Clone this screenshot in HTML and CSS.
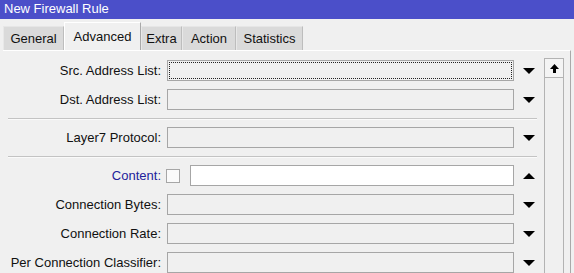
FILE: index.html
```html
<!DOCTYPE html>
<html lang="en">
<head>
    <meta charset="UTF-8">
    <meta name="viewport" content="width=device-width, initial-scale=1.0">
    <title>New Firewall Rule</title>
    <link rel="stylesheet" href="styles.css">
</head>
<body>

    <div class="window">
        <div class="titlebar">New Firewall Rule</div>

        <div class="tabs">
            <div class="tab tab-general">General</div>
            <div class="tab tab-advanced active">Advanced</div>
            <div class="tab tab-extra">Extra</div>
            <div class="tab tab-action">Action</div>
            <div class="tab tab-statistics">Statistics</div>
        </div>

        <div class="panel">
            <div class="form">
                <div class="row">
                    <label>Src. Address List:</label>
                    <div class="field focused"></div>
                    <span class="arrow down"></span>
                </div>
                <div class="row">
                    <label>Dst. Address List:</label>
                    <div class="field"></div>
                    <span class="arrow down"></span>
                </div>

                <div class="sep"></div>

                <div class="row">
                    <label>Layer7 Protocol:</label>
                    <div class="field"></div>
                    <span class="arrow down"></span>
                </div>

                <div class="sep sep-wide"></div>

                <div class="row">
                    <label class="label-blue">Content:</label>
                    <div class="field-group">
                        <span class="checkbox"></span>
                        <div class="field white"></div>
                    </div>
                    <span class="arrow up"></span>
                </div>
                <div class="row">
                    <label>Connection Bytes:</label>
                    <div class="field"></div>
                    <span class="arrow down"></span>
                </div>
                <div class="row">
                    <label>Connection Rate:</label>
                    <div class="field"></div>
                    <span class="arrow down"></span>
                </div>
                <div class="row">
                    <label>Per Connection Classifier:</label>
                    <div class="field"></div>
                    <span class="arrow down"></span>
                </div>
            </div>

            <div class="scrollbar">
                <div class="scroll-btn">
                    <svg width="9" height="9" viewBox="0 0 9 9">
                        <polygon points="4.5,0 9,5 0,5" fill="#000"/>
                        <rect x="3" y="5" width="3" height="4" fill="#000"/>
                    </svg>
                </div>
                <div class="scroll-track"></div>
            </div>
        </div>
    </div>

</body>
</html>
```

FILE: styles.css
```css
body {
    font-family: "Liberation Sans", Arial, sans-serif;
    font-size: 13px;
    background-color: #f0f0f0;
    color: #111;
    margin: 0;
    padding: 0;
}

.window {
    width: 574px;
    height: 273px;
    overflow: hidden;
    background-color: #f0f0f0;
}

.titlebar {
    height: 19px;
    line-height: 18px;
    padding-left: 4px;
    background-color: #4b4fc9;
    color: #fff;
}

/* tab strip */
.tabs {
    display: flex;
    align-items: flex-end;
    height: 31px;
    padding-left: 3px;
}

.tab {
    box-sizing: border-box;
    height: 24px;
    display: flex;
    align-items: center;
    justify-content: center;
    background-color: #dadada;
    border-top: 1px solid #e6e6e6;
    border-left: 1px solid #e8e8e8;
    border-right: 1px solid #bdbdbd;
}

    .tab.active {
        height: 28px;
        background-color: #f0f0f0;
        border-top: 1px solid #fff;
        border-left: 1px solid #fff;
        border-right: 1px solid #a9a9a9;
    }

.tab-general { width: 61px; }
.tab-advanced { width: 77px; }
.tab-extra { width: 41px; }
.tab-action { width: 54px; }
.tab-statistics { width: 67px; }

/* content panel */
.panel {
    display: flex;
    margin: 0 3px;
    height: 223px;
    border-top: 1px solid #fff;
    border-right: 1px solid #a9a9a9;
}

.form {
    padding-top: 9px;
}

.row {
    display: grid;
    grid-template-columns: 158px 347px 18px;
    column-gap: 6px;
    align-items: center;
    height: 21px;
    margin-bottom: 8px;
}

    .row label {
        text-align: right;
        white-space: nowrap;
    }

.label-blue {
    color: #22229b;
}

.field {
    box-sizing: border-box;
    height: 21px;
    border: 1px solid #a6a6a6;
    background-color: #f0f0f0;
}

    .field.focused {
        outline: 1px dotted #222;
        outline-offset: -3px;
    }

    .field.white {
        flex: 1;
        background-color: #fff;
    }

.field-group {
    display: flex;
    align-items: center;
    gap: 10px;
    margin-left: -1px;
}

.checkbox {
    box-sizing: border-box;
    width: 14px;
    height: 14px;
    border: 1px solid #a6a6a6;
    background-color: #fafafa;
}

.arrow {
    justify-self: center;
    width: 0;
    height: 0;
    border-left: 6px solid transparent;
    border-right: 6px solid transparent;
}

    .arrow.down {
        border-top: 6px solid #000;
    }

    .arrow.up {
        border-bottom: 6px solid #000;
    }

.sep {
    width: 529px;
    height: 1px;
    margin: 1px 0 7px 5px;
    background-color: #c3c3c3;
    border-bottom: 1px solid #fafafa;
}

    .sep.sep-wide {
        margin: 2px 0 7px 5px;
    }

/* vertical scrollbar */
.scrollbar {
    box-sizing: border-box;
    display: flex;
    flex-direction: column;
    width: 20px;
    margin: 7px 0 0 6px;
    border-left: 1px solid #b3b3b3;
    border-right: 1px solid #b3b3b3;
}

.scroll-btn {
    height: 18px;
    display: flex;
    align-items: center;
    justify-content: center;
    border-top: 1px solid #b3b3b3;
    border-bottom: 1px solid #b3b3b3;
    background-color: #f4f4f4;
}

.scroll-track {
    flex: 1;
    background-color: #f0f0f0;
}
```
